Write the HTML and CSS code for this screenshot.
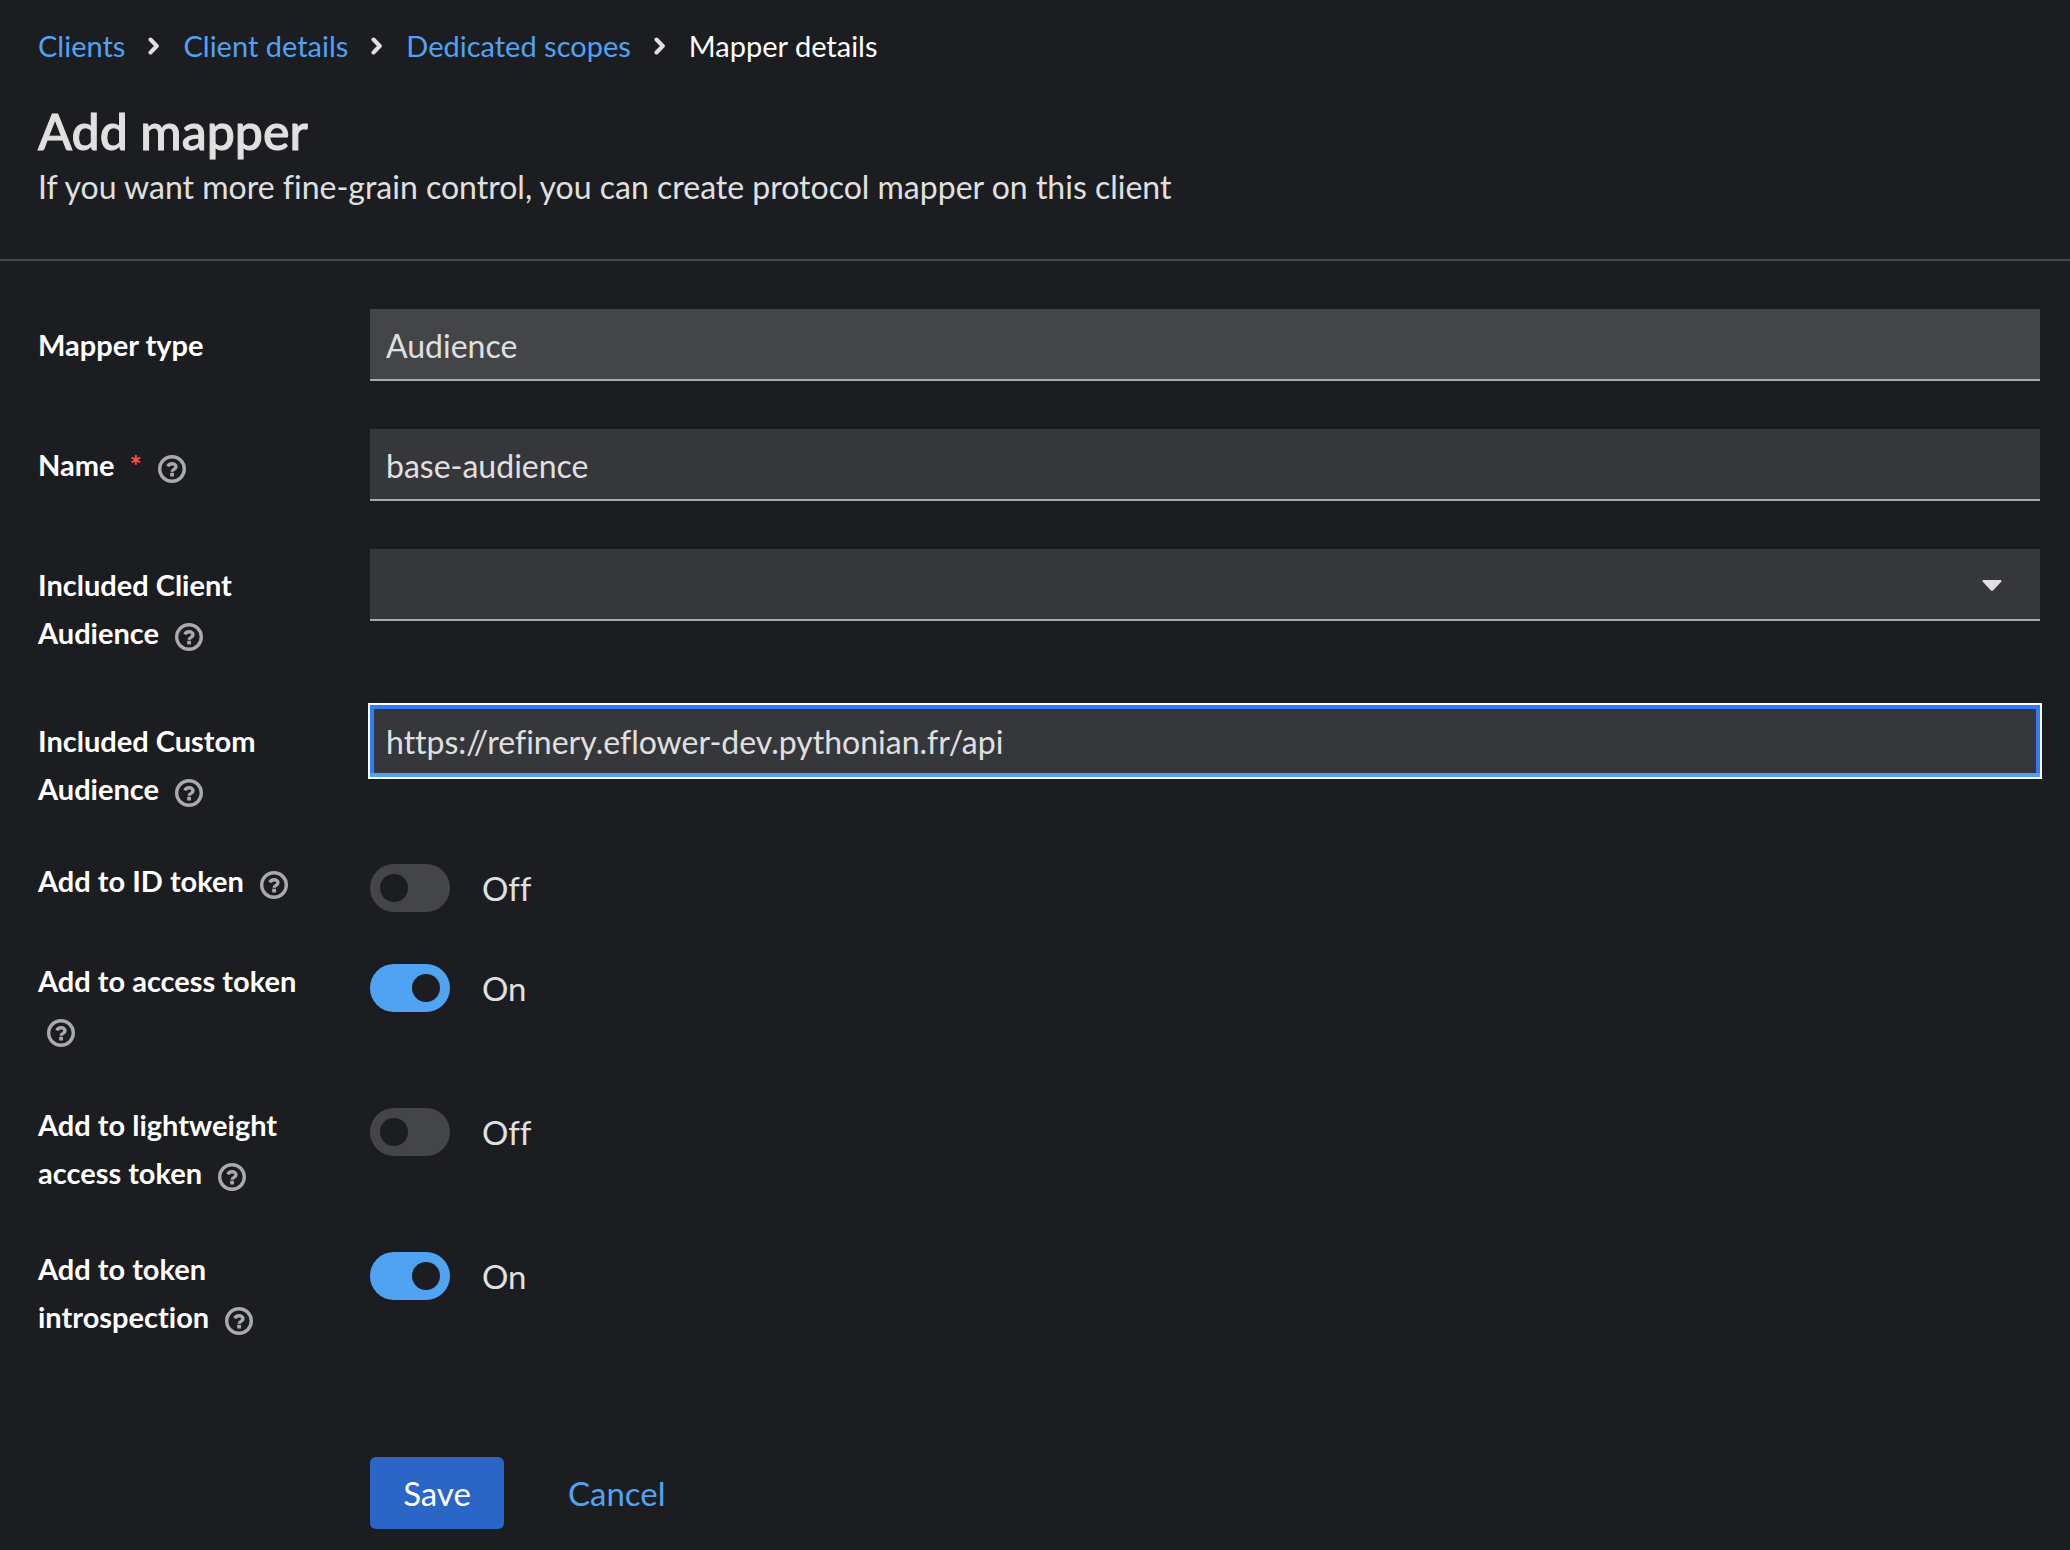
FILE: index.html
```html
<!DOCTYPE html>
<html lang="en">
<head>
<meta charset="utf-8">
<meta name="viewport" content="width=device-width, initial-scale=1">
<title>Add mapper</title>
<link rel="stylesheet" href="styles.css">
</head>
<body>
<svg class="sprite" aria-hidden="true">
  <symbol id="help" viewBox="0 0 28 28">
    <circle cx="14" cy="14" r="12.3" fill="none" stroke="currentColor" stroke-width="3.4"/>
    <path d="M9.900 11.300C10.600 9.500 12.100 8.700 14 8.700c2.300 0 4 1.200 4 3 0 2.700-3.800 2.600-3.800 5" fill="none" stroke="currentColor" stroke-width="3.400"/>
    <rect x="12.200" y="17.800" width="3.800" height="3.600" rx=".5" fill="currentColor"/>
  </symbol>
  <symbol id="angle" viewBox="0 0 12 18">
    <path d="M2.500 2.500 8.800 9l-6.300 6.500" fill="none" stroke="currentColor" stroke-width="4" stroke-linecap="round" stroke-linejoin="round"/>
  </symbol>
</svg>

<header class="page-header">
  <nav aria-label="Breadcrumb">
    <ol class="breadcrumb">
      <li><a href="#clients">Clients</a></li>
      <li><svg class="angle" aria-hidden="true"><use href="#angle"/></svg><a href="#client">Client details</a></li>
      <li><svg class="angle" aria-hidden="true"><use href="#angle"/></svg><a href="#scopes">Dedicated scopes</a></li>
      <li aria-current="page"><svg class="angle" aria-hidden="true"><use href="#angle"/></svg>Mapper details</li>
    </ol>
  </nav>
  <h1 class="title">Add mapper</h1>
  <p class="subtitle">If you want more fine-grain control, you can create protocol mapper on this client</p>
</header>

<main>
  <form class="form">
    <div class="fields">
      <div class="row">
        <div class="label"><label for="type">Mapper type</label></div>
        <input class="control readonly" id="type" type="text" value="Audience" readonly>
      </div>
      <div class="row">
        <div class="label"><label for="name">Name <span class="required" aria-hidden="true">*</span></label>
          <button class="help" type="button" aria-label="Help for name"><svg><use href="#help"/></svg></button></div>
        <input class="control" id="name" type="text" value="base-audience" required>
      </div>
      <div class="row">
        <div class="label"><label for="client-audience">Included Client Audience</label>
          <button class="help" type="button" aria-label="Help for included client audience"><svg><use href="#help"/></svg></button></div>
        <div class="select">
          <select class="control" id="client-audience"><option value=""></option></select>
          <svg class="caret" viewBox="0 0 20 12" aria-hidden="true"><path d="M1.500 0h17c1 0 1.500 1 .7 1.800l-8.200 8.600c-.6.600-1.400.6-2 0L.8 1.800C0 1 .5 0 1.500 0z" fill="currentColor"/></svg>
        </div>
      </div>
      <div class="row">
        <div class="label"><label for="custom-audience">Included Custom Audience</label>
          <button class="help" type="button" aria-label="Help for included custom audience"><svg><use href="#help"/></svg></button></div>
        <input class="control focused" id="custom-audience" type="text" value="https://refinery.eflower-dev.pythonian.fr/api">
      </div>
    </div>

    <div class="switches">
      <div class="row">
        <div class="label"><label for="id-token">Add to ID token</label>
          <button class="help" type="button" aria-label="Help for ID token"><svg><use href="#help"/></svg></button></div>
        <div class="switch"><input class="toggle" id="id-token" type="checkbox"><span>Off</span></div>
      </div>
      <div class="row">
        <div class="label"><label for="access-token">Add to access token</label>
          <button class="help" type="button" aria-label="Help for access token"><svg><use href="#help"/></svg></button></div>
        <div class="switch"><input class="toggle" id="access-token" type="checkbox" checked><span>On</span></div>
      </div>
      <div class="row">
        <div class="label"><label for="light-token">Add to lightweight access token</label>
          <button class="help" type="button" aria-label="Help for lightweight access token"><svg><use href="#help"/></svg></button></div>
        <div class="switch"><input class="toggle" id="light-token" type="checkbox"><span>Off</span></div>
      </div>
      <div class="row">
        <div class="label"><label for="introspection">Add to token introspection</label>
          <button class="help" type="button" aria-label="Help for token introspection"><svg><use href="#help"/></svg></button></div>
        <div class="switch"><input class="toggle" id="introspection" type="checkbox" checked><span>On</span></div>
      </div>
    </div>

    <div class="actions">
      <button class="button primary" type="submit">Save</button>
      <button class="button link" type="button">Cancel</button>
    </div>
  </form>
</main>
</body>
</html>
```

FILE: styles.css
```css
:root {
  --bg: #1c1d21;
  --field: #36373a;
  --field-readonly: #444548;
  --text: #e0e0e0;
  --muted: #a9aaac;
  --link: #50a3f3;
  --label-column: 300px;
  --column-gap: 32px;
}

* { box-sizing: border-box; }

body {
  margin: 0;
  background: var(--bg);
  color: var(--text);
  font: 400 33px/48px Lato, "Open Sans", sans-serif;
  font-variant-ligatures: none;
}

input, select, button {
  font: inherit;
  font-variant-ligatures: inherit;
  color: inherit;
}

.sprite { display: none; }

.page-header {
  padding: 22px 38px 48px;
  border-bottom: 2px solid #444548;
}

.breadcrumb {
  display: flex;
  margin: 0;
  padding: 0;
  list-style: none;
  font-size: 29px;
  color: #fff;
}

.breadcrumb li { display: flex; align-items: center; }
.breadcrumb a { color: var(--link); text-decoration: none; }

.angle {
  width: 12px;
  height: 18px;
  margin: 0 23px;
  color: var(--text);
}

.title {
  margin: 29px 0 0;
  font-size: 50px;
  font-weight: 500;
  line-height: 64px;
  -webkit-text-stroke: 1px currentColor;
}

.subtitle { margin: 0; font-size: 32px; }

.form { padding: 48px 30px 20px 38px; }

.fields {
  display: flex;
  flex-direction: column;
  gap: 48px;
}

.switches {
  display: flex;
  flex-direction: column;
  gap: 45px;
  margin-top: 44px;
}

.row {
  display: grid;
  grid-template-columns: var(--label-column) 1fr;
  column-gap: var(--column-gap);
  align-items: start;
}

.label {
  color: #fff;
  font-size: 29px;
  font-weight: 700;
}

.fields .label { padding-top: 12px; }
.switches .label { padding-bottom: 3px; }

.required {
  margin-left: 8px;
  color: #fe5142;
  font-size: 29px;
  line-height: 1;
}

.help {
  display: inline-block;
  width: 28px;
  height: 28px;
  margin: 0 0 0 9px;
  padding: 0;
  border: 0;
  background: none;
  color: var(--muted);
  line-height: 0;
  vertical-align: -7px;
}

.help svg { width: 28px; height: 28px; }

.control {
  width: 100%;
  height: 72px;
  padding: 3px 16px 0;
  border: 0;
  border-bottom: 2px solid #aaabac;
  border-radius: 0;
  outline: 0;
  background: var(--field);
  font-size: 32px;
  appearance: none;
}

.readonly { background: var(--field-readonly); }

.focused {
  padding-top: 5px;
  border-bottom: 4px solid var(--link);
  outline: 2px solid #fff;
  box-shadow: inset 4px 0 #327af7, inset -4px 0 #327af7, inset 0 4px #327af7;
}

.select { display: grid; align-items: center; }
.select > * { grid-area: 1 / 1; }

.caret {
  justify-self: end;
  width: 20px;
  height: 12px;
  margin: 2px 38px 0 0;
  pointer-events: none;
}

.switch {
  display: flex;
  align-items: center;
  gap: 32px;
  padding-top: 7px;
}

.toggle {
  display: flex;
  align-items: center;
  width: 80px;
  height: 48px;
  margin: 0;
  padding: 0 10px;
  border-radius: 24px;
  background: var(--field-readonly);
  appearance: none;
}

.toggle::before {
  content: "";
  width: 28px;
  height: 28px;
  border-radius: 50%;
  background: var(--bg);
}

.toggle:checked { justify-content: flex-end; background: var(--link); }

.actions {
  display: flex;
  gap: 32px;
  margin-top: 113px;
  padding-left: calc(var(--label-column) + var(--column-gap));
}

.button {
  min-width: 134px;
  height: 72px;
  padding: 0 32px;
  border: 0;
  border-radius: 6px;
  background: none;
}

.primary { background: #2b66c6; color: #fff; }
.link { color: var(--link); }
```
